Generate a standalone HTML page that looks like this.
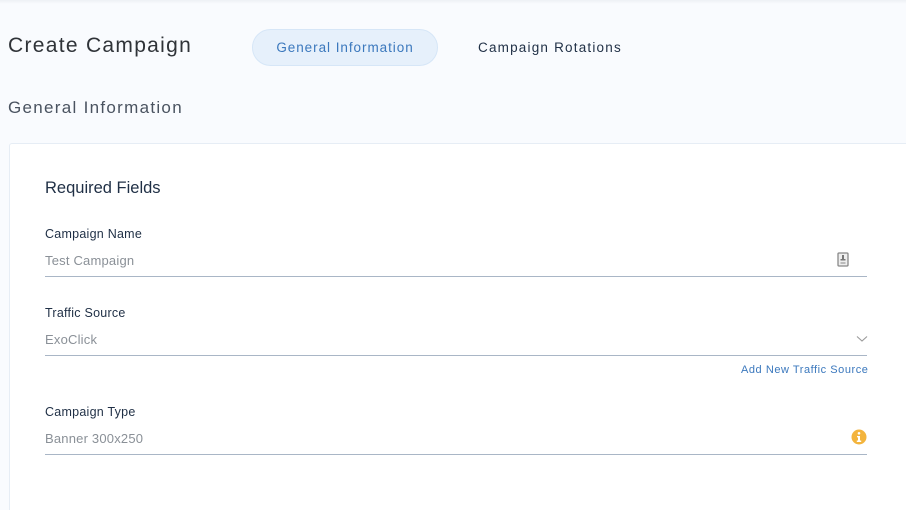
<!DOCTYPE html>
<html><head><meta charset="utf-8"><style>
*{margin:0;padding:0;box-sizing:border-box}
html{overflow:hidden;width:906px;height:510px}
body{width:906px;height:510px;overflow:hidden;background:#f9fbfe;font-family:"Liberation Sans",sans-serif;position:relative}
.topbar{position:absolute;left:0;top:0;width:906px;height:4px;background:linear-gradient(#eef1f5,#f9fbfe)}
.t{position:absolute;white-space:nowrap}
.h1{left:8px;top:34px;font-size:21px;color:#2f3338;letter-spacing:1.3px}
.pill{position:absolute;left:252px;top:29px;width:186px;height:37px;border-radius:19px;background:#e6f0fb;border:1px solid #d6e6f7;color:#3b78bd;font-size:13.5px;text-align:center;line-height:36px;letter-spacing:0.95px}
.tab2{left:478px;top:40px;font-size:13.5px;color:#1f2f45;letter-spacing:1.2px}
.h2{left:8px;top:98px;font-size:17px;color:#4a5360;letter-spacing:1.3px}
.card{position:absolute;left:9px;top:143px;width:910px;height:375px;background:#fff;border:1px solid #e6edf5;border-radius:3px}
.rf{left:45px;top:179px;font-size:16.5px;color:#1f2f45}
.lab{font-size:12.5px;color:#1f2f45;letter-spacing:0.25px}
.val{font-size:13px;color:#8a9097;letter-spacing:0.2px}
.line{position:absolute;left:45px;width:822px;height:1px;background:#a9b6c6}
.link{font-size:11px;color:#3b78bd;letter-spacing:0.55px}
</style></head><body>
<div class="topbar"></div>
<div class="t h1">Create Campaign</div>
<div class="pill">General Information</div>
<div class="t tab2">Campaign Rotations</div>
<div class="t h2">General Information</div>
<div class="card"></div>
<div class="t rf">Required Fields</div>
<div class="t lab" style="left:45px;top:227px">Campaign Name</div>
<div class="t val" style="left:45px;top:253px">Test Campaign</div>
<svg class="t" style="left:837px;top:252px" width="12" height="15" viewBox="0 0 12 15"><rect x="1" y="1" width="10" height="13" rx="1" fill="#eee" stroke="#888" stroke-width="1.3"/><rect x="5" y="3" width="2" height="4" fill="#777"/><rect x="3.5" y="7" width="5" height="1.5" fill="#777"/><rect x="3.5" y="10" width="5" height="2" fill="#bbb"/></svg>
<div class="line" style="top:276px"></div>
<div class="t lab" style="left:45px;top:306px">Traffic Source</div>
<div class="t val" style="left:45px;top:332px">ExoClick</div>
<svg class="t" style="left:856px;top:335px" width="12" height="8" viewBox="0 0 12 8"><path d="M1 1.5L6 6L11 1.5" fill="none" stroke="#999" stroke-width="1.1"/></svg>
<div class="line" style="top:355px"></div>
<div class="t link" style="left:741px;top:364px">Add New Traffic Source</div>
<div class="t lab" style="left:45px;top:405px">Campaign Type</div>
<div class="t val" style="left:45px;top:431px">Banner 300x250</div>
<svg class="t" style="left:851px;top:429px" width="16" height="16" viewBox="0 0 16 16"><circle cx="8" cy="8" r="7.5" fill="#f3b43d"/><circle cx="8" cy="4.3" r="1.3" fill="#fff"/><path d="M6 7h3v4.5h1.2V13H5.8v-1.5H7V8.4H6z" fill="#fff"/></svg>
<div class="line" style="top:454px"></div>
</body></html>
